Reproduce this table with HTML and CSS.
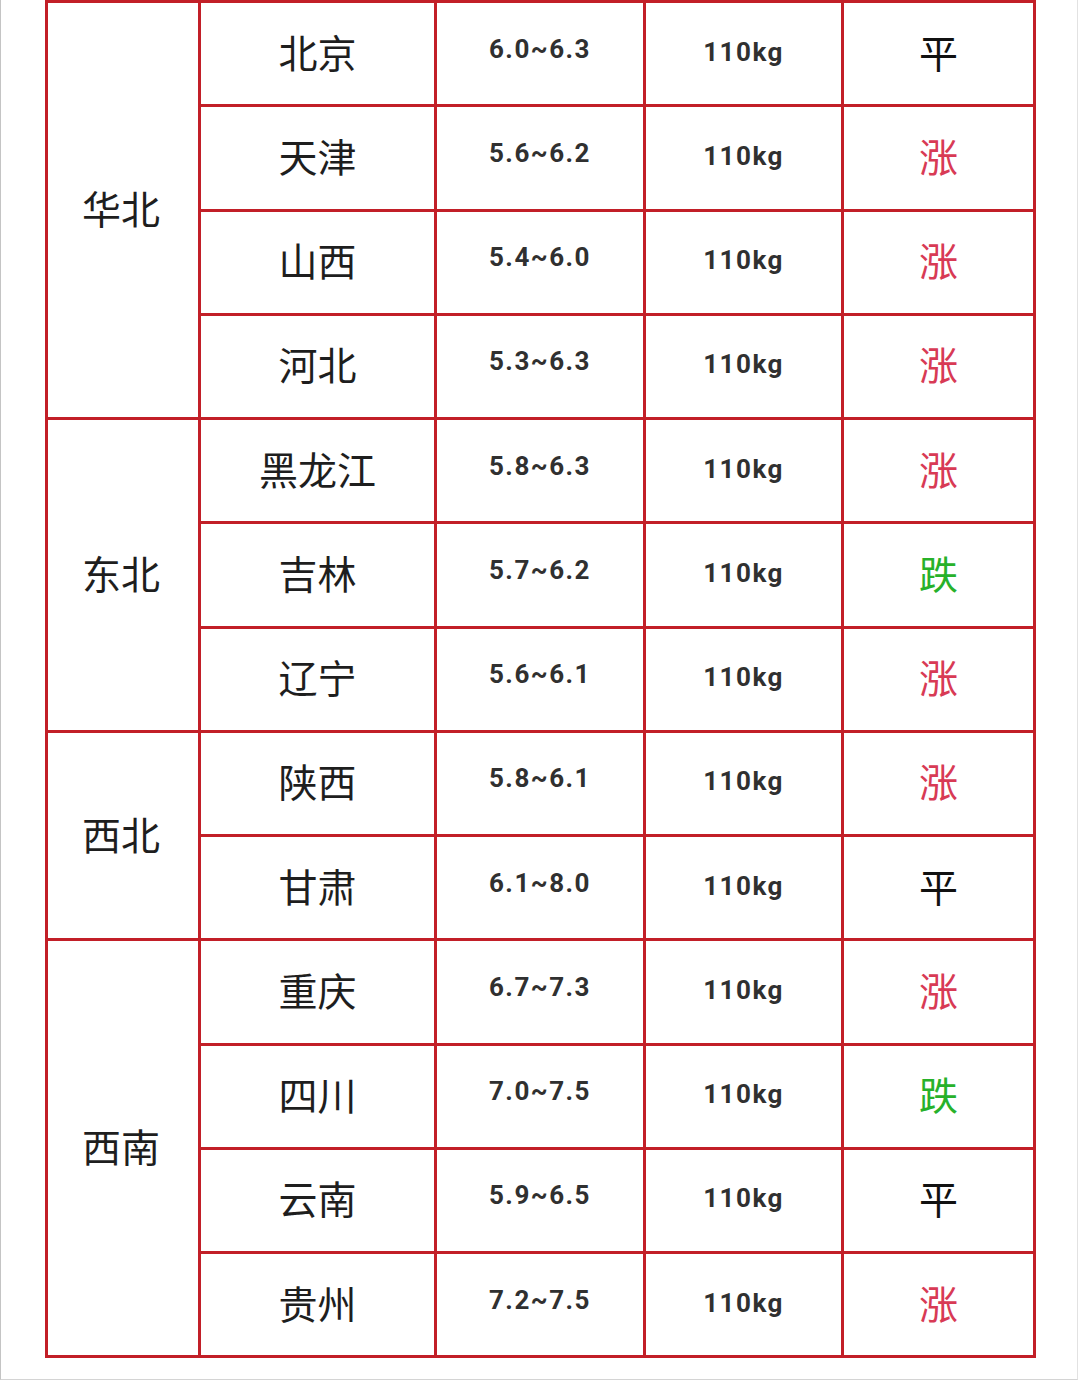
FILE: index.html
```html
<!DOCTYPE html>
<html lang="zh">
<head>
<meta charset="utf-8">
<link rel="stylesheet" href="styles.css">
</head>
<body>
<div class="page">
  <div class="grid">
    <div class="cell region r-huabei">华北</div>
    <div class="cell city">北京</div><div class="cell num">6.0~6.3</div><div class="cell wt">110kg</div><div class="cell tr flat">平</div>
    <div class="cell city">天津</div><div class="cell num">5.6~6.2</div><div class="cell wt">110kg</div><div class="cell tr up">涨</div>
    <div class="cell city">山西</div><div class="cell num">5.4~6.0</div><div class="cell wt">110kg</div><div class="cell tr up">涨</div>
    <div class="cell city">河北</div><div class="cell num">5.3~6.3</div><div class="cell wt">110kg</div><div class="cell tr up">涨</div>

    <div class="cell region r-dongbei">东北</div>
    <div class="cell city">黑龙江</div><div class="cell num">5.8~6.3</div><div class="cell wt">110kg</div><div class="cell tr up">涨</div>
    <div class="cell city">吉林</div><div class="cell num">5.7~6.2</div><div class="cell wt">110kg</div><div class="cell tr down">跌</div>
    <div class="cell city">辽宁</div><div class="cell num">5.6~6.1</div><div class="cell wt">110kg</div><div class="cell tr up">涨</div>

    <div class="cell region r-xibei">西北</div>
    <div class="cell city">陕西</div><div class="cell num">5.8~6.1</div><div class="cell wt">110kg</div><div class="cell tr up">涨</div>
    <div class="cell city">甘肃</div><div class="cell num">6.1~8.0</div><div class="cell wt">110kg</div><div class="cell tr flat">平</div>

    <div class="cell region r-xinan">西南</div>
    <div class="cell city">重庆</div><div class="cell num">6.7~7.3</div><div class="cell wt">110kg</div><div class="cell tr up">涨</div>
    <div class="cell city">四川</div><div class="cell num">7.0~7.5</div><div class="cell wt">110kg</div><div class="cell tr down">跌</div>
    <div class="cell city">云南</div><div class="cell num">5.9~6.5</div><div class="cell wt">110kg</div><div class="cell tr flat">平</div>
    <div class="cell city">贵州</div><div class="cell num">7.2~7.5</div><div class="cell wt">110kg</div><div class="cell tr up">涨</div>
  </div>
</div>
</body>
</html>
```

FILE: styles.css
```css
html, body {
  margin: 0;
  padding: 0;
  background: #ffffff;
}

.page {
  box-sizing: border-box;
  width: 1078px;
  height: 1380px;
  border-left: 1px solid #c4c4c4;
  border-right: 1px solid #e2e2e2;
  border-bottom: 1px solid #d4d4d4;
  padding-left: 44px;
  padding-top: 0;
}

.grid {
  display: grid;
  width: 991px;
  box-sizing: border-box;
  grid-template-columns: 150px 233px 206px 195px 189px;
  grid-template-rows: repeat(13, 101.25px);
  gap: 3px;
  padding: 3px;
  background: #c21f28;
}

.cell {
  background: #ffffff;
  display: flex;
  align-items: center;
  justify-content: center;
  box-sizing: border-box;
  font-family: "Noto Sans CJK SC", "Noto Sans", sans-serif;
  font-weight: 400;
  color: #1e1e1e;
}

.region {
  grid-column: 1;
  font-size: 39px;
  padding-right: 4px;
  padding-bottom: 6px;
}
.r-huabei { grid-row: 1 / span 4; }
.r-dongbei { grid-row: 5 / span 3; }
.r-xibei { grid-row: 8 / span 2; }
.r-xinan { grid-row: 10 / span 4; }

.city {
  font-size: 39px;
  padding-bottom: 6px;
}

.num, .wt {
  font-family: Roboto, "Liberation Sans", sans-serif;
  font-weight: 700;
  font-size: 26px;
  letter-spacing: 1.5px;
  color: #303030;
  padding-bottom: 10px;
}

.wt {
  padding-bottom: 4px;
}

.tr {
  font-size: 39px;
  padding-bottom: 6px;
}
.flat { color: #111111; }
.up { color: #d83a55; }
.down { color: #27b12a; }
```
